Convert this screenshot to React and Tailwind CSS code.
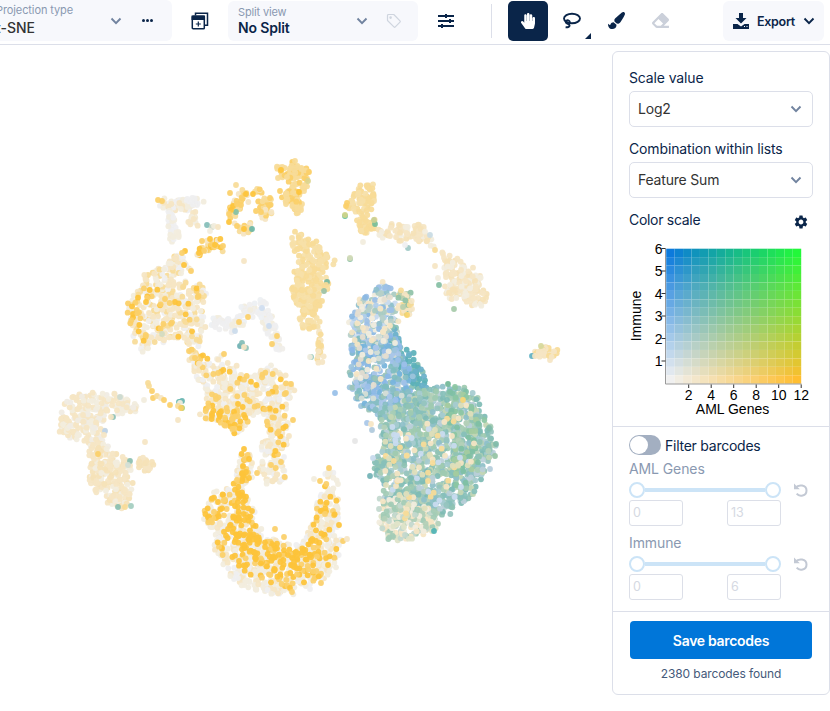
import React from "react";
import { FaHandPaper, FaPaintBrush, FaEraser } from "react-icons/fa";
import { MdSettings } from "react-icons/md";

const ORANGE = "#fdc43a";
const AMBER = "#fbd069";
const GOLD = "#f7dc98";
const SAND = "#f5e5c4";
const CREAM = "#f2edde";
const ASH = "#efeff0";

function makeRandom(seed) {
  let s = seed;
  return () => {
    s = (s + 0x6d2b79f5) | 0;
    let t = Math.imul(s ^ (s >>> 15), 1 | s);
    t = (t + Math.imul(t ^ (t >>> 7), 61 | t)) ^ t;
    return ((t ^ (t >>> 14)) >>> 0) / 4294967296;
  };
}

function inside(x, y, poly) {
  let hit = false;
  for (let i = 0, j = poly.length - 1; i < poly.length; j = i++) {
    const [xi, yi] = poly[i];
    const [xj, yj] = poly[j];
    if (yi > y !== yj > y && x < ((xj - xi) * (y - yi)) / (yj - yi) + xi) hit = !hit;
  }
  return hit;
}

const parse = (s) => s.split(" ").map((p) => p.split(",").map(Number));

// Each layer: outline, points per square pixel, colours (repeats add weight).
const LAYERS = [
  // upper left wisp
  ["159,199 198,198 204,204 192,208 180,213 172,213 161,205", 0.11, [SAND, CREAM, CREAM, ASH]],
  ["167,212 174,212 174,228 177,245 171,238 168,228", 0.12, [CREAM, ASH]],
  ["189,210 197,212 197,226 190,226", 0.12, [SAND, CREAM]],
  ["176,234 181,231 180,238", 0.2, [CREAM]],
  // ring
  ["240,189 258,187 264,196 271,197 272,212 267,219 255,217 262,212 260,202 250,196 243,206 236,212 231,222 228,220 229,208 236,200", 0.1, [SAND, GOLD, GOLD, AMBER]],
  ["235,224 245,227 255,223 250,232 244,234", 0.15, [AMBER, GOLD, SAND]],
  // top plume
  ["277,167 285,168 294,162 307,169 309,180 304,192 301,214 292,213 295,206 282,203 281,191 292,189 294,182 280,178", 0.11, [GOLD, GOLD, GOLD, AMBER]],
  // small arc
  ["196,255 203,241 220,238 224,245 219,253 210,248 197,259", 0.12, [AMBER, GOLD, ORANGE, SAND]],
  // tall column
  ["293,228 297,230 304,240 317,239 322,251 334,258 334,267 325,275 328,284 320,303 319,316 319,329 300,327 300,306 290,292 294,276 300,264 294,256", 0.09, [GOLD, GOLD, "#f6e0a8", "#f6e0a8"]],
  ["318,332 321,333 321,350 324,368 318,360", 0.15, [GOLD, SAND]],
  // left mass
  ["180,253 191,262 192,271 171,279 184,282 203,284 205,300 203,318 205,330 200,348 188,346 184,336 174,340 160,342 144,350 135,345 132,330 129,315 130,300 140,281 152,268 168,262 172,257", 0.068, [ASH, CREAM, CREAM, SAND, SAND, SAND, GOLD]],
  ["138,287 130,300 129,320 134,346 143,348 150,336 141,325 146,300 160,292", 0.025, [AMBER, ORANGE]],
  ["150,280 200,284 205,325 195,347 160,330", 0.007, [AMBER, ORANGE]],
  // pale bridge
  ["206,321 220,316 236,318 242,305 255,304 264,297 269,312 276,326 283,342 281,352 274,344 264,332 260,319 250,314 242,326 231,331 210,329", 0.09, [ASH, ASH, "#edf0f3", CREAM, "#f0eee9"]],
  // middle mass
  ["188,350 196,356 201,365 213,361 222,355 232,362 243,372 254,374 270,367 281,371 290,380 295,392 288,401 283,412 288,424 289,440 284,452 284,482 265,484 260,472 262,455 264,440 270,430 266,415 254,412 244,428 238,436 230,433 226,423 213,423 201,416 208,405 205,388 197,380", 0.078, [CREAM, CREAM, SAND, SAND, ASH]],
  ["188,352 222,360 240,373 270,370 290,384 282,412 287,425 283,480 266,482 268,430 260,410 240,435 203,417 206,385", 0.014, [AMBER, ORANGE, AMBER]],
  ["203,414 216,408 250,408 240,436 228,428 206,418", 0.03, [AMBER, ORANGE]],
  ["184,338 190,338 201,368 194,366", 0.08, [AMBER, GOLD, SAND]],
  // hook
  ["242,449 251,454 252,478 245,490 254,510 260,530 272,540 284,545 304,542 311,528 316,510 322,488 326,468 334,468 339,490 339,525 344,540 337,560 330,582 310,583 296,594 270,594 250,590 235,582 222,560 213,548 215,538 202,520 204,504 213,491 228,489 237,492 236,475", 0.07, [CREAM, ASH, SAND, CREAM]],
  ["242,449 250,454 250,478 243,495 256,530 270,542 290,547 304,546 312,530 318,508 329,470 336,505 338,530 338,555 325,575 300,592 270,582 240,572 216,548 220,535 204,518 208,496 234,490 235,475", 0.026, [AMBER, ORANGE, ORANGE]],
  ["236,475 246,470 245,500 262,540 300,552 315,545 310,570 280,565 250,560 226,540 222,525 238,510", 0.022, [ORANGE]],
  // far left
  ["64,405 73,395 94,393 115,394 135,402 137,411 122,413 108,414 99,423 105,432 107,446 94,446 77,443 60,433 57,421", 0.085, [SAND, SAND, CREAM, "#f0ece3"]],
  ["90,446 104,450 120,454 130,463 132,478 132,490 128,504 120,508 108,501 96,492 90,482 91,458", 0.1, [SAND, SAND, "#f5e2b8", CREAM]],
  ["137,462 144,456 154,466 145,473", 0.15, [SAND, "#f5e2b8"]],
  // upper right arc
  ["360,183 374,183 375,200 371,214 377,230 370,233 359,230 357,222 357,212 345,207 352,196", 0.1, [GOLD, GOLD, "#f6e0a8"]],
  ["377,230 393,225 408,226 418,219 424,225 430,238 435,248 423,242 412,239 402,243 390,236 380,236", 0.105, [SAND, SAND, "#f5e2b8", CREAM]],
  ["442,253 454,256 468,267 479,275 485,292 487,303 477,308 464,302 450,298 442,288 444,272", 0.1, [SAND, SAND, "#f5e2b8", CREAM]],
  ["532,356 541,347 560,353 550,359", 0.12, [SAND, GOLD]],
  // blue and green continent
  ["349,320 359,302 372,289 385,283 394,289 394,304 398,315 396,328 398,345 372,352 350,345", 0.1, ["#9cc0e6", "#c9dcf0", "#afcdec", "#8fc0cc", "#b7d0c8", "#8db9e2", CREAM, CREAM, SAND, "#a9cbc2"]],
  ["402,290 411,292 413,310 406,316 398,306", 0.15, [SAND, "#b7cfae", "#8fc2a8", GOLD]],
  ["392,325 397,325 400,345 412,352 424,374 428,386 415,392 400,375 392,355", 0.085, ["#5fb3b5", "#6ab0c9", "#5bb0b9", "#86bfb4"]],
  ["354,340 396,336 400,352 412,375 410,402 400,412 378,414 360,405 351,385 351,360", 0.1, ["#8bb8e6", "#76b4dc", "#7db6cf", "#9dc4dd", "#88bdc4", "#9ac4b8", "#9cbfe9", "#d6dfd6", "#a9c6e8", "#7fbcc0"]],
  ["378,412 400,403 425,388 445,385 465,388 478,398 487,420 495,445 487,462 479,485 470,500 448,515 424,514 386,500 380,478 372,468 384,445", 0.092, ["#8fc3b4", "#9fcab0", "#87bfb9", "#a8cdb5", "#94c4be", "#b4d0b8", "#7fbbb5", "#a6cbd0", "#c4d6b4", "#8ebfc8", "#b9cfd8"]],
  ["382,492 428,508 440,518 434,530 414,536 402,542 386,539 380,520", 0.115, [SAND, "#dfe3c8", "#b3d0b8", "#c3d8cf", "#a3cbb6", CREAM]],
  ["445,388 465,390 478,405 484,430 488,450 478,478 455,488 450,440", 0.02, ["#7fc0a4", "#8cc6a2", "#a5cb9f"]],
  ["380,430 470,400 484,450 460,495 400,520 384,490", 0.01, [SAND, "#dfdfba", GOLD, "#c9dcf0"]],
  ["352,310 390,290 396,340 380,400 356,380", 0.011, [CREAM, SAND, "#e5ded0"]],
];

// Individually placed cells: x, y, colour.
const SINGLES = [
  [158, 200, AMBER], [162, 201, AMBER], [207, 225, "#84bdb8"], [212, 227, "#c6d6c6"], [214, 226, CREAM], [210, 231, CREAM], [218, 227, SAND],
  [252, 229, "#6cb7a8"], [236, 212, "#84c0a5"], [236, 185, "#f7dc98"], [230, 193, AMBER], [244, 261, SAND], [253, 194, ORANGE], [246, 194, ORANGE],
  [233, 206, ORANGE], [231, 210, ORANGE], [229, 222, ORANGE], [244, 229, ORANGE], [256, 211, AMBER], [261, 212, AMBER], [270, 198, AMBER],
  [237, 204, AMBER], [241, 205, AMBER], [229, 214, AMBER], [237, 226, AMBER],
  [309, 172, AMBER], [280, 191, AMBER], [281, 170, ORANGE], [299, 192, ORANGE], [308, 181, "#dcd48d"], [295, 161, GOLD],
  [210, 239, ORANGE], [202, 241, AMBER], [215, 245, ORANGE], [223, 246, AMBER], [185, 251, ORANGE], [182, 253, AMBER], [184, 265, ORANGE], [191, 271, AMBER],
  [240, 346, "#6eb0b3"], [242, 343, "#83bcb6"], [246, 348, "#8fc3b8"], [244, 347, SAND], [311, 357, "#86c3b3"], [310, 357, CREAM],
  [248, 317, AMBER], [239, 322, AMBER], [235, 331, "#cbdcec"], [269, 326, "#ccdcee"], [262, 308, "#d0def0"], [277, 336, AMBER], [272, 344, AMBER], [162, 334, "#d2dac0"],
  [148, 383, GOLD], [149, 386, GOLD], [152, 391, AMBER], [153, 398, AMBER], [157, 396, GOLD], [161, 398, SAND], [164, 400, AMBER], [170, 405, AMBER], [144, 400, CREAM],
  [179, 402, "#65b5aa"], [182, 401, "#67b5b0"], [180, 403, CREAM], [178, 406, GOLD], [182, 408, "#a9cc67"], [181, 408, AMBER], [178, 420, SAND], [145, 442, SAND],
  [120, 397, "#cbd9d0"], [113, 417, "#8cbfb6"], [111, 417, SAND], [105, 431, "#bcd3eb"], [104, 435, SAND], [98, 454, AMBER], [130, 461, "#8cc0b2"], [128, 465, "#d3dfd6"], [118, 507, "#8abfb2"], [131, 506, "#a4cdbf"], [125, 507, GOLD],
  [345, 216, "#5fbf9c"], [345, 215, "#d1d489"], [375, 224, "#76bd97"], [374, 220, "#c8d093"], [350, 259, "#8cc0a5"], [350, 258, "#d4dcb9"], [363, 242, CREAM], [347, 203, AMBER], [346, 206, AMBER],
  [408, 248, "#a0c9c6"], [430, 235, "#c9dbe4"], [405, 245, ASH], [435, 250, GOLD], [435, 266, SAND], [439, 285, "#87bfa5"], [438, 278, CREAM], [454, 309, "#a7caaa"],
  [324, 291, "#9cc1a2"], [327, 282, "#75b9a2"], [326, 285, GOLD], [322, 301, GOLD], [407, 315, "#f9d56e"], [335, 393, "#98bfe8"], [355, 441, "#e6e6e6"], [532, 356, "#5fb0c4"], [535, 356, SAND], [541, 346, "#d6d89c"],
  [489, 428, "#80bba9"], [496, 444, "#80bba9"], [495, 456, "#96c4a5"], [490, 469, "#b5cddc"], [434, 531, "#4fb3b5"], [448, 384, "#72b898"],
  [275, 529, AMBER], [284, 537, AMBER], [343, 541, AMBER], [347, 539, SAND], [252, 511, ORANGE], [293, 420, AMBER], [291, 384, AMBER], [224, 354, AMBER],
  [244, 449, ORANGE], [245, 459, AMBER], [249, 459, ORANGE], [243, 466, ORANGE], [246, 472, ORANGE], [249, 478, ORANGE], [237, 480, AMBER], [238, 492, ORANGE], [239, 498, ORANGE], [257, 473, AMBER],
  [310, 589, ASH], [321, 583, AMBER], [290, 588, ORANGE], [292, 592, AMBER], [314, 479, CREAM], [320, 481, AMBER], [329, 468, AMBER],
  [367, 423, "#a9c7e8"], [371, 424, SAND], [372, 430, "#afc9dc"], [373, 458, "#c6d9ec"], [370, 476, "#72b3b6"], [463, 400, "#f9d675"],
];

const CELLS = (() => {
  const rand = makeRandom(2380);
  const out = [];
  for (const [shape, density, colors] of LAYERS) {
    const poly = parse(shape);
    const xs = poly.map((p) => p[0]);
    const ys = poly.map((p) => p[1]);
    const x0 = Math.min(...xs);
    const y0 = Math.min(...ys);
    const w = Math.max(...xs) - x0;
    const h = Math.max(...ys) - y0;
    const tries = Math.round(w * h * density * 1.08);
    for (let i = 0; i < tries; i++) {
      const x = x0 + rand() * w;
      const y = y0 + rand() * h;
      const c = colors[Math.floor(rand() * colors.length)];
      // a little scatter past the outline keeps the edges ragged
      const jx = (rand() - 0.5) * 4.5;
      const jy = (rand() - 0.5) * 4.5;
      if (inside(x, y, poly)) out.push([Math.round((x + jx) * 3) / 3, Math.round((y + jy) * 3) / 3, c]);
    }
  }
  return out.concat(SINGLES);
})();

function Scatter() {
  return (
    <svg width="612" height="666" viewBox="0 45 612 666" className="block shrink-0">
      {CELLS.map(([x, y, c], i) => (
        <circle key={i} cx={x} cy={y} r="2.9" fill={c} fillOpacity="0.93" />
      ))}
    </svg>
  );
}

const CORNERS = { tl: [12, 122, 220], tr: [34, 248, 58], bl: [240, 240, 240], br: [255, 190, 48] };

function heat(u, v) {
  const { tl, tr, bl, br } = CORNERS;
  const ch = [0, 1, 2].map((k) =>
    Math.round((bl[k] * (1 - u) + br[k] * u) * (1 - v) + (tl[k] * (1 - u) + tr[k] * u) * v)
  );
  return `rgb(${ch.join(",")})`;
}

function ColorScale() {
  const n = 16;
  const size = 135 / n;
  const cells = [];
  for (let r = 0; r < n; r++) {
    for (let c = 0; c < n; c++) {
      cells.push(
        <rect key={`${r}-${c}`} x={53.2 + c * size} y={13.7 + r * size} width={size} height={size} fill={heat(c / (n - 1), 1 - r / (n - 1))} />
      );
    }
  }
  return (
    <svg width="216" height="190" className="block" fontFamily="'Liberation Sans', Arial, sans-serif" fontSize="14" fill="#000">
      {cells}
      <path d="M52.500 13.500v135.500H188.500" fill="none" stroke="#999" />
      {[1, 2, 3, 4, 5, 6].map((t) => {
        const y = 148.5 - t * 22.5;
        return (
          <g key={t}>
            <path d={`M48.500 ${y}h4`} stroke="#333" />
            <text x="49.500" y={y + 5} textAnchor="end">{t}</text>
          </g>
        );
      })}
      {[2, 4, 6, 8, 10, 12].map((t) => {
        const x = 53.2 + t * 11.25;
        return (
          <g key={t}>
            <path d={`M${x} 149.500v3.500`} stroke="#333" />
            <text x={x} y="165" textAnchor="middle">{t}</text>
          </g>
        );
      })}
      <text x="119.500" y="178.500" textAnchor="middle">AML Genes</text>
      <text transform="translate(28 81) rotate(-90)" textAnchor="middle">Immune</text>
    </svg>
  );
}

function Chevron({ className, size = 12 }) {
  return (
    <svg width={size} height={size} viewBox="0 0 12 12" className={className} fill="none" stroke="currentColor" strokeWidth="1.900">
      <path d="M1.500 3.500 6 8.200l4.500-4.700" />
    </svg>
  );
}

function Select({ label, value }) {
  return (
    <div>
      <div className="h-[18px] text-[14px] leading-[18px] tracking-[-0.14px] text-[#0a2549]">{label}</div>
      <div className="mt-1 flex h-9 items-center justify-between rounded-[5px] border border-[#dcdfe9] pb-px pl-2 pr-[10px] text-[14px] tracking-[-0.2px] text-[#333]">
        {value}
        <Chevron className="text-[#71839f]" />
      </div>
    </div>
  );
}

function Range({ label, min, max }) {
  return (
    <div className="h-[74px]">
      <div className="h-5 text-[14px] leading-5 tracking-[-0.1px] text-[#8a99b1]">{label}</div>
      <div className="flex h-[22px] items-center">
        <div className="flex w-[152px] items-center">
          <span className="size-4 rounded-full border-2 border-[#cce4f7] bg-white" />
          <span className="h-1 flex-1 bg-[#cce4f7]" />
          <span className="size-4 rounded-full border-2 border-[#cce4f7] bg-white" />
        </div>
        <svg width="15" height="14" viewBox="0 0 15 14" className="ml-3" fill="none" stroke="#c3c9d4" strokeWidth="2">
          <path d="M2.500 4.800C5.500 1 13.500 1.700 13.500 7.400c0 5.600-7 6.900-9.800 3.300" />
          <path d="M1 .5v5.800h5.800z" fill="#c3c9d4" stroke="none" />
        </svg>
      </div>
      <div className="-mt-px flex w-[152px] justify-between">
        {[min, max].map((v) => (
          <div key={v} className="flex h-[26px] w-[54px] items-center rounded-[3px] border border-[#dcdfe8] pl-[3px] text-[12.5px] text-[#d5d9e2]">{v}</div>
        ))}
      </div>
    </div>
  );
}

function Panel() {
  return (
    <aside className="mt-[6px] h-[644px] w-[218px] shrink-0 rounded-md border border-[#dcdfe9] bg-white">
      <div className="h-[375px] border-b border-[#dcdfe9]">
        <div className="flex flex-col gap-[13px] pl-4 pr-4 pt-[17px]">
          <Select label="Scale value" value="Log2" />
          <Select label="Combination within lists" value="Feature Sum" />
          <div className="flex h-[18px] items-center justify-between text-[14px] tracking-[-0.3px] text-[#0a2549]">
            <span className="-mt-0.5">Color scale</span>
            <MdSettings size={16} className="mr-1 mt-1" />
          </div>
        </div>
        <div className="mt-[6px] h-[180px]">
          <ColorScale />
        </div>
      </div>
      <div className="h-[185px] border-b border-[#dcdfe9] pl-4">
        <div className="flex h-8 items-center pt-[4px] text-[14px] tracking-[-0.25px] text-[#0a2549]">
          <span className="mr-1 flex h-5 w-8 items-center rounded-full bg-[#a3afc1] p-px">
            <span className="size-[18px] rounded-full bg-white" />
          </span>
          Filter barcodes
        </div>
        <Range label="AML Genes" min="0" max="13" />
        <Range label="Immune" min="0" max="6" />
      </div>
      <div className="flex flex-col items-center pt-[9px]">
        <button className="h-[38px] w-[182px] rounded-[4px] bg-[#0076d9] text-[14px] font-semibold tracking-[-0.3px] text-white">Save barcodes</button>
        <div className="mt-[6px] text-[12px] leading-[18px] tracking-[-0.1px] text-[#455a7a]">2380 barcodes found</div>
      </div>
    </aside>
  );
}

function Toolbar() {
  return (
    <header className="flex h-[45px] items-start border-b border-[#dcdfe9] text-[#0a2549]">
      <div className="flex h-[41px] w-[172px] items-center rounded-r-md bg-[#f7f8fc]">
        <div className="-ml-[4px] w-[115px] shrink-0">
          <div className="whitespace-nowrap text-[11px] leading-[15px] tracking-[-0.1px] text-[#8a99b1]">Projection type</div>
          <div className="text-[14px] font-medium leading-5 text-[#333]">t-SNE</div>
        </div>
        <Chevron className="-ml-[1px] text-[#71839f]" />
        <span className="ml-[20px] flex gap-px">
          <i className="size-[3px] rounded-full bg-[#0a2549]" />
          <i className="size-[3px] rounded-full bg-[#0a2549]" />
          <i className="size-[3px] rounded-full bg-[#0a2549]" />
        </span>
      </div>
      <svg width="18" height="18" viewBox="0 0 18 18" className="ml-[19px] mt-3" fill="none" stroke="currentColor" strokeWidth="1.500">
        <path d="M4.500 3.500V1.300h12v12h-2.500" />
        <rect x="1.300" y="4.200" width="12" height="12.500" rx=".8" />
        <path d="M1.300 4.200h12v3h-12z" fill="currentColor" />
        <path d="M7.300 9.500v5M4.800 12h5" strokeWidth="1.200" />
      </svg>
      <div className="ml-[19px] mt-px flex h-10 w-[190px] items-center rounded-md bg-[#f7f8fc] pl-[10px]">
        <div className="w-[118px]">
          <div className="text-[11px] leading-[14px] tracking-[-0.15px] text-[#8a99b1]">Split view</div>
          <div className="text-[14px] font-semibold leading-[18px] tracking-[-0.15px]">No Split</div>
        </div>
        <Chevron className="text-[#71839f]" />
        <svg width="16" height="16" viewBox="0 0 16 16" className="ml-[18px]" fill="none" stroke="#cfd5df" strokeWidth="1.200" strokeLinejoin="round">
          <path d="M1.500 2.500a1 1 0 0 1 1-1h5.300l6.200 6.300a1 1 0 0 1 0 1.400L9.300 13.900a1 1 0 0 1-1.400 0L1.500 7.500z" />
          <circle cx="4.600" cy="4.600" r=".7" />
        </svg>
      </div>
      <svg width="16" height="14" viewBox="0 0 16 14" className="ml-5 mt-[14px]" stroke="currentColor" strokeWidth="2">
        <path d="M0 2h16M0 7h16M0 12h16M8 0v4M12 5v4M4 10v4" />
      </svg>
      <div className="ml-[37px] mt-1 h-[34px] w-px bg-[#dcdfe9]" />
      <div className="ml-4 mt-px flex size-10 items-center justify-center rounded-[5px] bg-[#0a2549] text-white">
        <FaHandPaper size={16} />
      </div>
      <svg width="29" height="29" viewBox="0 0 29 29" className="ml-[15px] mt-3" fill="none" stroke="currentColor" strokeWidth="1.900">
        <ellipse cx="9" cy="6.500" rx="8" ry="4.800" />
        <path d="M6.200 11.200a2 1.700 0 1 0-3.400-.8c.4 1.900 3.800 1.200 3.800 3.200 0 1.400-2 1.800-4 1.600" />
        <path d="M28 21v6h-6z" fill="currentColor" stroke="none" />
      </svg>
      <FaPaintBrush size={17} className="ml-4 mt-3" />
      <FaEraser size={17} className="ml-[27px] mt-3 text-[#cbd0da]" />
      <div className="ml-[54px] mt-px flex h-10 w-[101px] items-center rounded-md bg-[#f7f8fc] pl-[10px]">
        <svg width="16" height="16" viewBox="0 0 16 16" fill="currentColor">
          <path d="M6 0h4v5h3.500L8 10.500 2.500 5H6zM0 11h4.500L8 13.500 11.500 11H16v5H0z" />
          <path d="M11 13.500h1M13.500 13.500h1" stroke="#fff" />
        </svg>
        <span className="ml-2 mt-0.5 w-[39px] text-[12.500px] font-semibold tracking-[-0.3px]">Export</span>
        <Chevron className="ml-[7px]" />
      </div>
    </header>
  );
}

export default function App() {
  return (
    <div className="h-[711px] w-[830px] overflow-hidden bg-white font-['Inter',sans-serif]">
      <Toolbar />
      <main className="flex">
        <Scatter />
        <Panel />
      </main>
    </div>
  );
}
